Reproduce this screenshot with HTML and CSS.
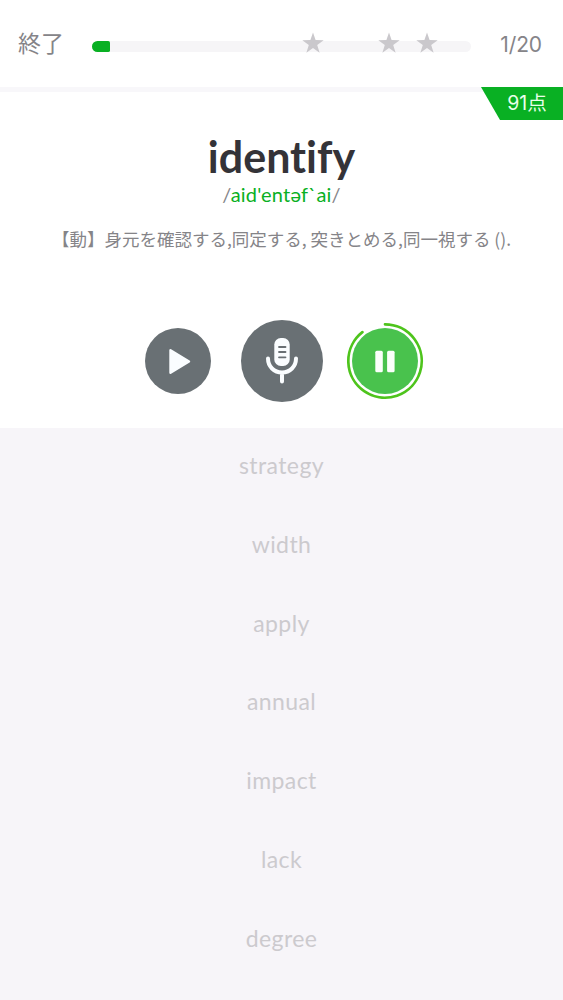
FILE: index.html
```html
<!DOCTYPE html>
<html lang="ja">
<head>
    <meta charset="UTF-8">
    <meta name="viewport" content="width=device-width, initial-scale=1.0">
    <title>identify</title>
    <link rel="stylesheet" href="styles.css">
</head>
<body>
    <header class="header">
        <div class="quit">終了</div>
        <div class="progress">
            <div class="progress-fill" style="width: 4.7%"></div>
            <svg class="star" style="left: 58.4%" viewBox="0 0 22 22"><path d="M11 0.5l2.6 7.6 8.1 .1-6.5 4.8 2.4 7.7-6.6-4.6-6.6 4.6 2.4-7.7L.3 8.2l8.1-.1z"/></svg>
            <svg class="star" style="left: 78.4%" viewBox="0 0 22 22"><path d="M11 0.5l2.6 7.6 8.1 .1-6.5 4.8 2.4 7.7-6.6-4.6-6.6 4.6 2.4-7.7L.3 8.2l8.1-.1z"/></svg>
            <svg class="star" style="left: 88.4%" viewBox="0 0 22 22"><path d="M11 0.5l2.6 7.6 8.1 .1-6.5 4.8 2.4 7.7-6.6-4.6-6.6 4.6 2.4-7.7L.3 8.2l8.1-.1z"/></svg>
        </div>
        <div class="count">1/20</div>
    </header>

    <main class="card">
        <div class="points">91点</div>
        <h1 class="word">identify</h1>
        <p class="phonetic">/<span>aid'entəf`ai</span>/</p>
        <p class="meaning">【動】身元を確認する,同定する, 突きとめる,同一視する ().</p>

        <div class="controls">
            <button class="btn">
                <svg width="66" height="66" viewBox="0 0 66 66">
                    <path d="M25.5 22.2v22.6L44 33.5z" fill="#fafdff" stroke="#fafdff" stroke-width="2.4" stroke-linejoin="round"/>
                </svg>
            </button>
            <button class="btn btn-mic">
                <svg width="82" height="82" viewBox="0 0 82 82">
                    <rect x="33.3" y="18" width="15.4" height="28" rx="6.5" fill="#fafdff"/>
                    <path d="M38 27h6.5M38 32h6.5M38 37.3h6.5" stroke="#697074" stroke-width="1.8" stroke-linecap="round"/>
                    <path d="M27 38.5c0 8 6 14 14 14s14-6 14-14M41 53v8.5" fill="none" stroke="#fafdff" stroke-width="4" stroke-linecap="round"/>
                </svg>
            </button>
            <button class="btn btn-pause">
                <svg width="66" height="66" viewBox="0 0 66 66">
                    <rect x="23.3" y="22.7" width="7.5" height="21.5" rx="1.5" fill="#fafffa"/>
                    <rect x="35.1" y="22.7" width="7.5" height="21.5" rx="1.5" fill="#fafffa"/>
                </svg>
                <svg class="ring" viewBox="0 0 78 78">
                    <path d="M39 2.3A36.7 36.7 0 1 1 16.4 10.1" fill="none" stroke="#4ec41c" stroke-width="2.7" stroke-linecap="round"/>
                </svg>
            </button>
        </div>
    </main>

    <ul class="words">
        <li>strategy</li>
        <li>width</li>
        <li>apply</li>
        <li>annual</li>
        <li>impact</li>
        <li>lack</li>
        <li>degree</li>
    </ul>
</body>
</html>
```
FILE: styles.css
```css
* {
    box-sizing: border-box;
}
body {
    margin: 0;
    min-height: 1000px;
    background-color: #f7f5f9;
    font-family: Lato, "Noto Sans CJK JP", sans-serif;
    font-variant-ligatures: none;
}
.header {
    display: flex;
    align-items: center;
    height: 87px;
    padding: 5px 21px 5px 18px;
    background-color: #fff;
    color: #858488;
}
.quit {
    width: 74px;
    font-family: "Noto Sans CJK JP", sans-serif;
    font-size: 23px;
    line-height: 30px;
    margin-bottom: 3px;
}
.progress {
    position: relative;
    width: 379px;
    height: 11px;
    margin-top: 5px;
    border-radius: 6px;
    background-color: #f6f5f7;
}
.progress-fill {
    height: 11px;
    border-radius: 6px 2px 2px 6px;
    background-color: #09b023;
}
.star {
    position: absolute;
    top: -9px;
    width: 22px;
    height: 22px;
    margin-left: -11px;
    fill: #cac8cc;
}
.count {
    margin-left: auto;
    margin-top: 1px;
    font-family: Inter, sans-serif;
    font-size: 21px;
    letter-spacing: -0.1px;
}
.card {
    position: relative;
    height: 341px;
    padding-top: 42px;
    border-top: 5px solid #f8f7fa;
    background-color: #fff;
    text-align: center;
}
.points {
    position: absolute;
    top: -5px;
    right: 0;
    width: 82px;
    height: 33px;
    padding-left: 10px;
    background-color: #09b023;
    clip-path: polygon(0 0, 100% 0, 100% 100%, 19px 100%);
    color: #eaffea;
    font-family: Inter, "Noto Sans CJK JP", sans-serif;
    font-size: 19.5px;
    line-height: 33px;
}
.word {
    margin: 0;
    color: #343338;
    font-size: 43px;
    line-height: 46px;
}
.phonetic {
    margin: 0;
    color: #858488;
    font-size: 20px;
    letter-spacing: 0.2px;
    line-height: 28px;
}
.phonetic span {
    color: #09b023;
}
.meaning {
    margin: 17px 0 0;
    color: #858488;
    font-family: "Noto Sans CJK JP", sans-serif;
    font-size: 17.5px;
    line-height: 28px;
    white-space: nowrap;
}
.controls {
    display: flex;
    justify-content: center;
    align-items: center;
    gap: 29.5px;
    margin-top: 67px;
}
.btn {
    position: relative;
    width: 66px;
    height: 66px;
    padding: 0;
    border: none;
    border-radius: 50%;
    background-color: #697074;
}
.btn svg {
    display: block;
}
.btn-mic {
    width: 82px;
    height: 82px;
}
.btn-pause {
    background-color: #49c24d;
}
.btn .ring {
    position: absolute;
    top: -6px;
    left: -6px;
    width: 78px;
    height: 78px;
}
.words {
    margin: 0;
    padding: 0;
    list-style: none;
    color: #cccace;
    font-size: 23px;
    letter-spacing: 0.4px;
    text-align: center;
}
.words li {
    height: 78.8px;
    line-height: 74px;
}
```
